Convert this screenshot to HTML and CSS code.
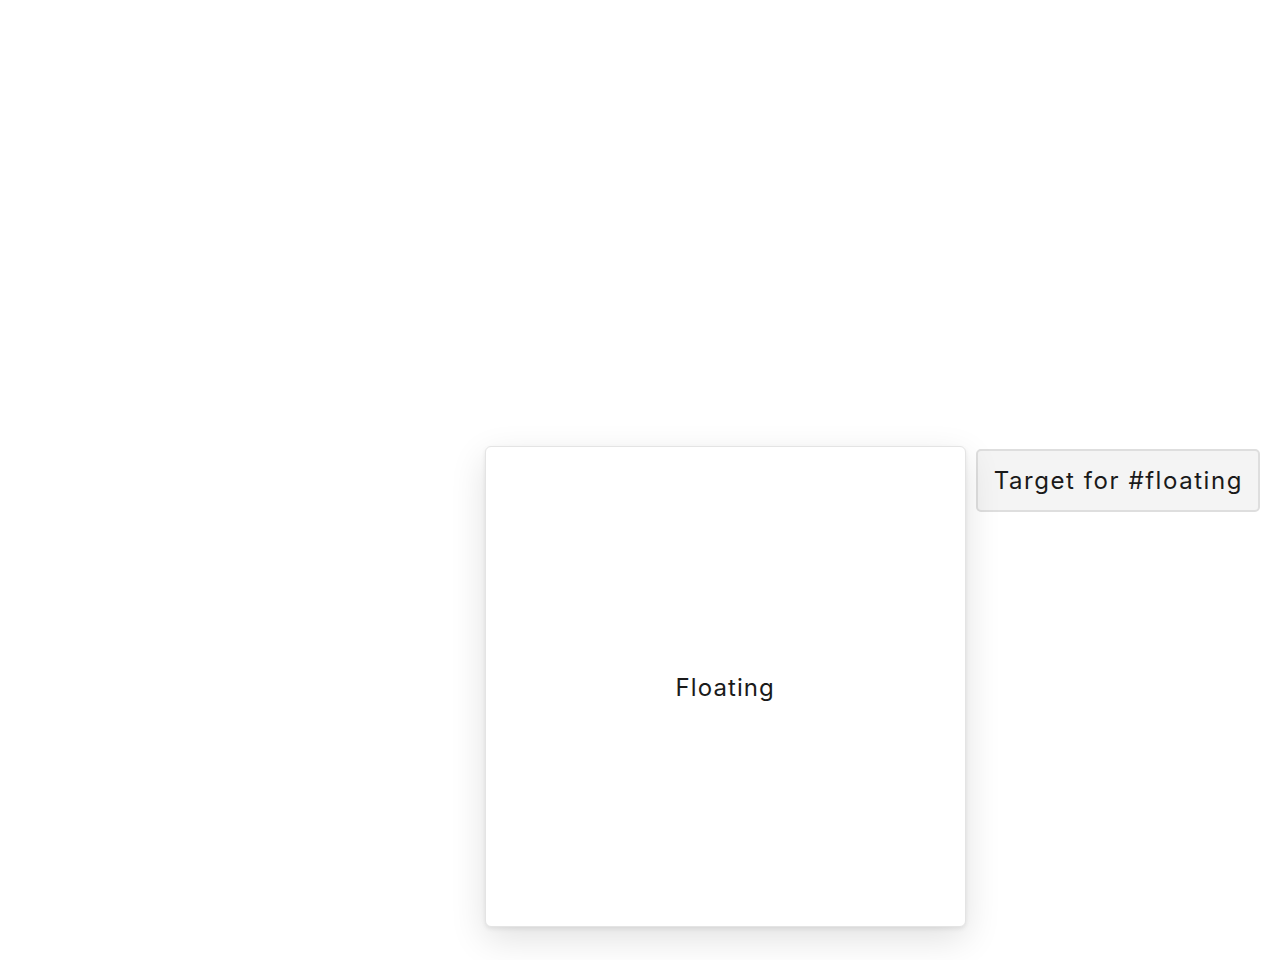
FILE: index.html
```html
<!DOCTYPE html>
<html>
<head>
<meta charset="utf-8">
<link rel="stylesheet" href="styles.css">
</head>
<body>
<main class="stage">
  <div class="anchor">
    <button class="target">Target for #floating</button>
    <div class="floating">Floating</div>
  </div>
</main>
</body>
</html>
```
FILE: styles.css
```css
html, body {
  margin: 0;
  padding: 0;
  background: #ffffff;
}
body {
  font-family: Inter, "Noto Sans", sans-serif;
  color: #1a1a1a;
}
.stage {
  height: 960px;
  box-sizing: border-box;
  padding-right: 20px;
  display: flex;
  align-items: center;
  justify-content: flex-end;
}
.anchor {
  position: relative;
}
.target {
  display: block;
  font-family: Inter, "Noto Sans", sans-serif;
  font-size: 24px;
  letter-spacing: 0.065em;
  color: #1a1a1a;
  background: #f4f4f4;
  border: 2px solid #dedede;
  border-radius: 5px;
  padding: 1px 15px 0 16px;
  height: 63px;
  box-sizing: border-box;
}
.floating {
  position: absolute;
  top: -3px;
  right: calc(100% + 10px);
  width: 481px;
  height: 481px;
  box-sizing: border-box;
  padding-top: 3px;
  background: #ffffff;
  border: 1px solid #e4e4e4;
  border-radius: 6px;
  box-shadow: 0 12px 36px rgba(0, 0, 0, 0.12), 0 2px 4px rgba(0, 0, 0, 0.08);
  display: flex;
  align-items: center;
  justify-content: center;
  font-size: 24px;
  letter-spacing: 0.045em;
}
```
